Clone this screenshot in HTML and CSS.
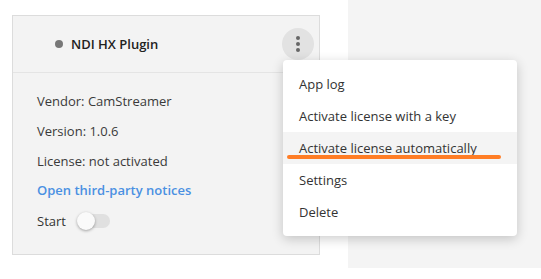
FILE: index.html
```html
<!DOCTYPE html>
<html lang="en">
<head>
  <meta charset="UTF-8" />
  <title>Plugins</title>
  <link rel="stylesheet" href="styles.css">
</head>
<body>

<div class="page">
  <!-- Plugin list -->
  <section class="list">
    <div class="card">
      <div class="card-head">
        <span class="dot"></span>
        <h3>NDI HX Plugin</h3>
        <button class="kebab"><span></span><span></span><span></span></button>
      </div>
      <div class="card-body">
        <p>Vendor: CamStreamer</p>
        <p>Version: 1.0.6</p>
        <p>License: not activated</p>
        <a href="#">Open third-party notices</a>
        <div class="start">
          Start
          <span class="switch"><span class="knob"></span></span>
        </div>
      </div>
    </div>
  </section>

  <section class="side"></section>

  <!-- Context menu -->
  <ul class="menu">
    <li>App log</li>
    <li>Activate license with a key</li>
    <li class="active">Activate license automatically</li>
    <li>Settings</li>
    <li>Delete</li>
  </ul>
</div>

</body>
</html>
```

FILE: styles.css
```css
* {
  box-sizing: border-box;
}

html, body {
  margin: 0;
  padding: 0;
  background: #fff;
  font-family: 'Open Sans', sans-serif;
  font-size: 13px;
  color: #333;
}

.page {
  display: flex;
  position: relative;
}

.list {
  width: 348px;
  padding: 15px 0 0 12px;
}

.side {
  flex: 1;
  height: 268px;
  background-color: #f4f4f4;
}

.card {
  width: 308px;
  height: 240px;
  background-color: #f3f3f3;
  border: 1px solid #dcdcdc;
}

.card-head {
  height: 57px;
  display: flex;
  align-items: center;
  padding: 0 4px 0 42px;
  border-bottom: 1px solid #e4e4e4;
}

.dot {
  width: 8px;
  height: 8px;
  border-radius: 50%;
  background-color: #777;
  margin-right: 8px;
}

.card-head h3 {
  flex: 1;
  margin: 0;
  font-size: 13px;
  font-weight: 600;
  color: #222;
}

.kebab {
  width: 32px;
  height: 32px;
  border: none;
  border-radius: 50%;
  background-color: #e2e2e2;
  display: flex;
  flex-direction: column;
  align-items: center;
  justify-content: center;
  gap: 2px;
  padding: 0;
  margin-right: 1px;
}

.kebab span {
  width: 4px;
  height: 4px;
  border-radius: 50%;
  background-color: #666;
}

.card-body {
  padding: 13px 24px;
}

.card-body p {
  margin: 0;
  line-height: 30px;
  color: #3a3a3a;
}

.card-body a {
  display: block;
  line-height: 29px;
  color: #4a90e2;
  font-weight: 600;
  text-decoration: none;
}

.start {
  display: flex;
  align-items: center;
  line-height: 32px;
  gap: 12px;
  color: #333;
}

.switch {
  position: relative;
  width: 32px;
  height: 14px;
  border-radius: 7px;
  background-color: #e0e0e0;
}

.knob {
  position: absolute;
  left: -1px;
  top: -2px;
  width: 18px;
  height: 18px;
  border-radius: 50%;
  background-color: #fafafa;
  box-shadow: 0 1px 3px rgba(0,0,0,0.35);
}

.menu {
  position: absolute;
  left: 283px;
  top: 60px;
  width: 234px;
  margin: 0;
  padding: 8px 0;
  list-style: none;
  background-color: #fff;
  border-radius: 4px;
  box-shadow: 0 3px 12px rgba(0,0,0,0.2);
}

.menu li {
  height: 32px;
  line-height: 32px;
  padding: 0 16px;
  color: #333;
  white-space: nowrap;
}

.menu li.active {
  position: relative;
  background-color: #f4f4f4;
}

/* orange marker under the chosen item */
.menu li.active::after {
  content: '';
  position: absolute;
  left: 4px;
  right: 16px;
  top: 23px;
  height: 4px;
  border-radius: 2px;
  background-color: #ff7d25;
}
```
